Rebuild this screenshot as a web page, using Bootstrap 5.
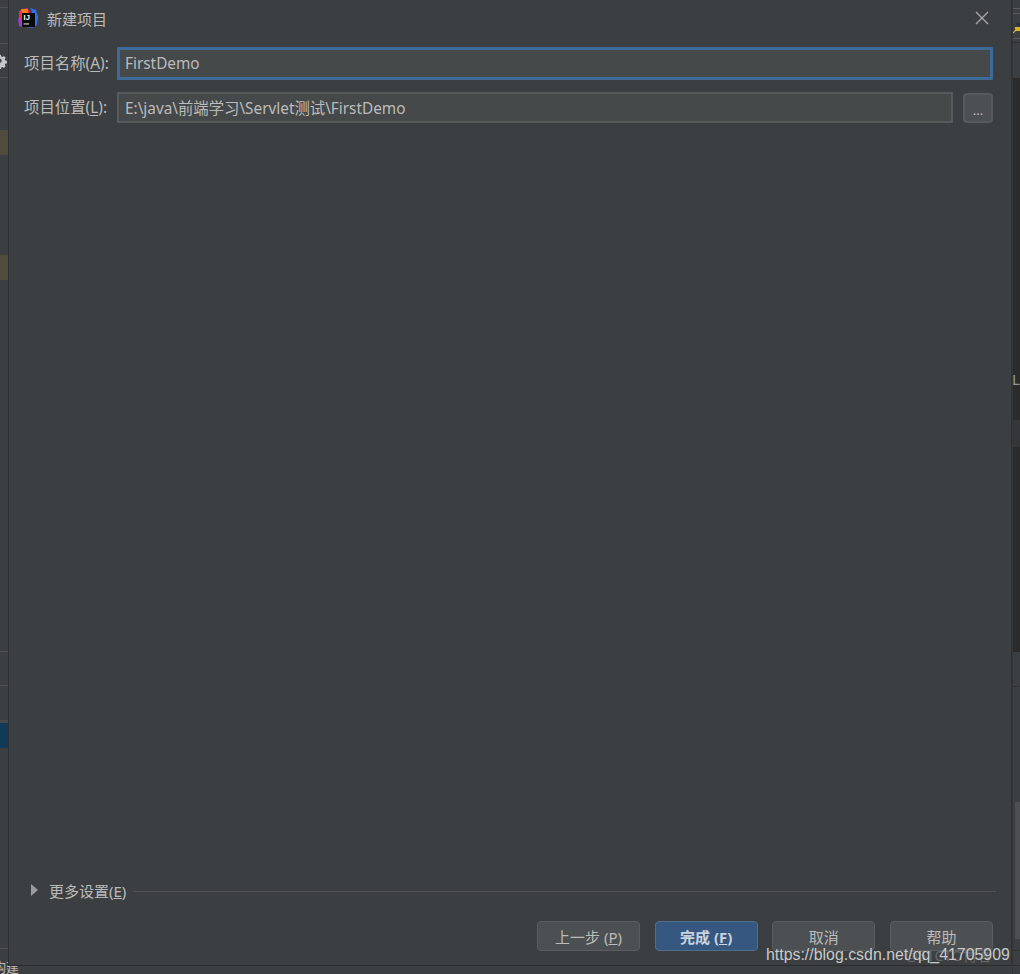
<!DOCTYPE html>
<html lang="zh">
<head>
<meta charset="utf-8">
<title>新建项目</title>
<link href="https://cdn.jsdelivr.net/npm/bootstrap@5.3.0/dist/css/bootstrap.min.css" rel="stylesheet">
<style>
html,body{height:974px;overflow:hidden}
body{background:#3c3f41;color:#bbb;font:15.4px/20px "Noto Sans","Noto Sans CJK SC",sans-serif}
.shell{height:974px;width:1020px}
.strip-l{width:8px;flex:none;background:#3c3f41}
.strip-r{width:8px;flex:none;background:#2b2b2b;overflow:hidden;border-left:1px solid #333537}
.dlg{width:1004px;flex:none;height:966px;background:#3c3f41;border-left:1px solid #2b2d2f;border-right:1px solid #2f3133;border-bottom:1px solid #2b2d2f;position:relative}
.sl{border-bottom:1px solid #515151;flex:none}
.gold{height:25px;background:#504b3f;flex:none}
.sea{height:25px;background:#113a58;flex:none}
.gear{height:16px;width:8px;overflow:hidden;margin-top:9px;flex:none}
.bot{font-size:13px;line-height:14px;height:14px;flex:none;white-space:nowrap;color:#bbb;text-indent:-7px}
.hd{height:36px;padding-left:9px;flex:none}
.hd-t{margin-left:9px;font-size:15px;padding-top:2px}
.frm{padding:11px 18px 0 15px}
.lbl{width:93px;flex:none;white-space:nowrap;padding-top:1px}
.lbl u{text-underline-offset:2px}
.dlg .form-control{border-radius:0;background:#45494a;color:#bbb;font:15.35px/20px "Noto Sans","Noto Sans CJK SC",sans-serif;padding:0 6px 1px;box-shadow:none}
.fi1{height:33px;border:3px solid #3d6a99;padding-left:5px!important;width:876px;flex:none;border-radius:1px!important}
.fi2{height:31px;border:2px solid #575a5b;width:836px;flex:none}
.row1{margin-bottom:12px}
.dots{width:30px;height:30px;margin-left:10px;padding:0;flex:none;background:#4c5052;border:2px solid #565a5c;border-radius:4px;color:#bbb;font-size:13px;line-height:30px}
.fill{flex:1 1 auto}
.more{padding:0 15px 2px 22px;height:20px;flex:none;font-size:15px}
.more .ttx{position:relative;top:1px}
.tri{width:0;height:0;border-left:7px solid #9a9c9e;border-top:6px solid transparent;border-bottom:6px solid transparent;margin-right:11px;flex:none}
.rule{height:1px;background:#515151;flex:1;margin-left:7px;position:relative;top:1px}
.foot{padding:20px 18px 14px 0;gap:14.67px;flex:none}
.dlg .btn{width:103px;height:30px;padding:2px 0 0;border-radius:4px;font:15px/26px "Noto Sans","Noto Sans CJK SC",sans-serif;color:#bbb;background:#4c5052;border:1px solid #5a5e60}
.dlg .btn.go{background:#365880;border-color:#4c708c;color:#c9d3de;font-weight:700}
.mk{position:absolute;left:766px;top:946px;white-space:nowrap;font:15.9px/18px "Liberation Sans",sans-serif;color:#c8cacb}
.gh{position:absolute;left:905px;top:947px;white-space:nowrap;font:14.5px/16px "Noto Sans","Noto Sans CJK SC",sans-serif;color:#66696b}
.dkt{background:#3c3f41;flex:none}
.tl{border-bottom:1px solid #5a5c5e;flex:none}
.tld{border-bottom:1px solid #2f3133;flex:none}
.thumb{height:137px;background:#4d4f50;margin-left:2px;flex:none}
.lL{font:15px/16px "Noto Sans",sans-serif;color:#8f9699;margin-left:-1px;height:16px;flex:none}
.sr{height:27px;background:#343638;flex:none}
</style>
</head>
<body>
<div class="shell d-flex">
  <div class="strip-l d-flex flex-column">
    <div style="height:8px" class="sl"></div>
    <div style="height:36px" class="sl"></div>
    <div class="gear" aria-hidden="true">
      <svg width="16" height="16" viewBox="0 0 16 16" style="margin-left:-8px;display:block"><path fill="#c4c6c8" d="M6.5 1h3l.4 2 1.4.6 1.7-1.1 2.1 2.1-1.1 1.7.6 1.4 2 .4v3l-2 .4-.6 1.4 1.1 1.7-2.1 2.1-1.7-1.1-1.4.6-.4 2h-3l-.4-2-1.4-.6-1.7 1.1-2.1-2.1 1.1-1.7-.6-1.4-2-.4v-3l2-.4.6-1.4-1.1-1.7 2.1-2.1 1.7 1.1 1.4-.6zM8 5.6a2.4 2.4 0 1 0 0 4.8 2.4 2.4 0 0 0 0-4.8z" transform="scale(.85) translate(1 1)"/></svg>
    </div>
    <div style="height:9px" class="sl"></div>
    <div style="height:52px;flex:none"></div>
    <div class="gold"></div>
    <div style="height:100px;flex:none"></div>
    <div class="gold"></div>
    <div style="height:372px" class="sl"></div>
    <div style="height:34px" class="sl"></div>
    <div style="height:37px;border-bottom:3px solid #47494b;flex:none"></div>
    <div class="sea"></div>
    <div style="height:201px" class="sl"></div>
    <div class="fill"></div>
    <div class="bot">构建</div>
  </div>

  <div class="dlg d-flex flex-column">
    <div class="hd d-flex align-items-center">
      <svg width="20" height="20" viewBox="0 0 20 20" aria-hidden="true">
        <path fill="#fe2857" d="M1 3 9 0l3 4-8 10-3-2z"/>
        <path fill="#9c3fd0" d="M0 10l5 2-1 7-3-1z"/>
        <path fill="#ff7a1a" d="M3 1h7v4H4z"/>
        <path fill="#2f6ff0" d="M12 0l6 2 2 7-1 8-5 3-6-1 6-15z"/>
        <rect x="4" y="5" width="13" height="14" fill="#0a0a0a"/>
        <text x="5.6" y="12.4" font-family="Liberation Sans" font-weight="700" font-size="7.5" fill="#fff">IJ</text>
        <rect x="5.6" y="15.4" width="5.5" height="1.1" fill="#ddd"/>
      </svg>
      <span class="hd-t">新建项目</span>
      <svg class="ms-auto" style="margin-right:22px" width="14" height="14" viewBox="0 0 14 14" aria-label="关闭"><path d="M1 1l12 12M13 1 1 13" stroke="#a7a9ab" stroke-width="1.3" fill="none"/></svg>
    </div>
    <div class="frm">
      <div class="d-flex align-items-center row1">
        <label class="lbl" for="pn">项目名称(<u>A</u>):</label>
        <input id="pn" class="form-control fi1" value="FirstDemo">
      </div>
      <div class="d-flex align-items-center">
        <label class="lbl" for="pl">项目位置(<u>L</u>):</label>
        <input id="pl" class="form-control fi2" value="E:\java\前端学习\Servlet测试\FirstDemo">
        <button class="dots" type="button">...</button>
      </div>
    </div>
    <div class="fill"></div>
    <div class="more d-flex align-items-center">
      <span class="tri"></span>
      <span class="ttx">更多设置(<u>E</u>)</span>
      <span class="rule"></span>
    </div>
    <div class="foot d-flex justify-content-end">
      <button class="btn" type="button">上一步 (<u>P</u>)</button>
      <button class="btn go" type="button">完成 (<u>F</u>)</button>
      <button class="btn" type="button">取消</button>
      <button class="btn" type="button">帮助</button>
    </div>
  </div>

  <div class="strip-r d-flex flex-column">
    <div class="dkt d-flex flex-column" style="height:78px">
      <div class="tl" style="height:9px"></div>
      <div class="tl" style="height:5px"></div>
      <svg width="8" height="12" viewBox="0 0 8 12" style="margin-top:9px;flex:none" aria-hidden="true"><path d="M0 10 3 7" stroke="#c9a227" stroke-width="1.4"/><path d="M3 1h3v3" stroke="#23272b" stroke-width="1.3" fill="none"/><rect x="2" y="4" width="6" height="4" fill="#e0b020"/></svg>
      <div class="tl" style="height:4px"></div>
      <div class="tld" style="height:4px"></div>
    </div>
    <div style="height:293px;flex:none"></div>
    <div class="lL">L</div>
    <div style="height:33px;flex:none"></div>
    <div class="sr"></div>
    <div style="height:205px;flex:none"></div>
    <div class="dkt d-flex flex-column flex-grow-1">
      <div class="tld" style="height:35px"></div>
      <div style="height:115px;flex:none"></div>
      <div class="thumb"></div>
      <div class="tld" style="height:12px"></div>
      <div class="tld" style="height:15px"></div>
    </div>
  </div>
</div>
<div class="gh">@51CTO博客</div>
<div class="mk">https://blog.csdn.net/qq_41705909</div>
<script src="https://cdn.jsdelivr.net/npm/bootstrap@5.3.0/dist/js/bootstrap.bundle.min.js"></script>
</body>
</html>
